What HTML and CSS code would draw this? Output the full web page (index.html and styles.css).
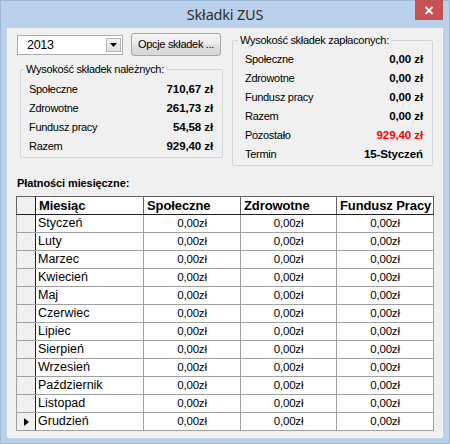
FILE: index.html
```html
<!DOCTYPE html>
<html lang="pl">
<head>
<meta charset="utf-8">
<title>Składki ZUS</title>
<link rel="stylesheet" href="styles.css">
</head>
<body>
<div class="window">
  <div class="titlebar">
    <span class="spacer"></span>
    <div class="title">Składki ZUS</div>
    <div class="close">
      <svg width="10" height="9" viewBox="0 0 10 9"><path d="M1.5 1 L8.5 8 M8.5 1 L1.5 8" stroke="#fff" stroke-width="1.8" fill="none"/></svg>
    </div>
  </div>
  <div class="client">
    <div class="top">
      <div class="leftcol">
        <div class="controls">
          <div class="combo">
            <span class="combo-text">2013</span>
            <span class="combo-btn"><svg width="7" height="4" viewBox="0 0 7 4"><path d="M0 0 H7 L3.5 4 Z" fill="#000"/></svg></span>
          </div>
          <div class="button">Opcje składek ...</div>
        </div>
        <fieldset class="group group-left">
          <legend>Wysokość składek należnych:</legend>
          <div class="row"><span>Społeczne</span><b>710,67 zł</b></div>
          <div class="row"><span>Zdrowotne</span><b>261,73 zł</b></div>
          <div class="row"><span>Fundusz pracy</span><b>54,58 zł</b></div>
          <div class="row"><span>Razem</span><b>929,40 zł</b></div>
        </fieldset>
      </div>
      <fieldset class="group group-right">
        <legend>Wysokość składek zapłaconych:</legend>
        <div class="row"><span>Społeczne</span><b>0,00 zł</b></div>
        <div class="row"><span>Zdrowotne</span><b>0,00 zł</b></div>
        <div class="row"><span>Fundusz pracy</span><b>0,00 zł</b></div>
        <div class="row"><span>Razem</span><b>0,00 zł</b></div>
        <div class="row"><span>Pozostało</span><b class="red">929,40 zł</b></div>
        <div class="row"><span>Termin</span><b>15-Styczeń</b></div>
      </fieldset>
    </div>
    <div class="section-label">Płatności miesięczne:</div>
    <table class="grid">
      <colgroup>
        <col class="c-ind"><col class="c-month"><col class="c-val"><col class="c-val2"><col class="c-val">
      </colgroup>
      <thead>
        <tr><th class="ind"></th><th>Miesiąc</th><th>Społeczne</th><th>Zdrowotne</th><th>Fundusz Pracy</th></tr>
      </thead>
      <tbody>
        <tr><td class="ind"></td><td class="m">Styczeń</td><td>0,00zł</td><td>0,00zł</td><td>0,00zł</td></tr>
        <tr><td class="ind"></td><td class="m">Luty</td><td>0,00zł</td><td>0,00zł</td><td>0,00zł</td></tr>
        <tr><td class="ind"></td><td class="m">Marzec</td><td>0,00zł</td><td>0,00zł</td><td>0,00zł</td></tr>
        <tr><td class="ind"></td><td class="m">Kwiecień</td><td>0,00zł</td><td>0,00zł</td><td>0,00zł</td></tr>
        <tr><td class="ind"></td><td class="m">Maj</td><td>0,00zł</td><td>0,00zł</td><td>0,00zł</td></tr>
        <tr><td class="ind"></td><td class="m">Czerwiec</td><td>0,00zł</td><td>0,00zł</td><td>0,00zł</td></tr>
        <tr><td class="ind"></td><td class="m">Lipiec</td><td>0,00zł</td><td>0,00zł</td><td>0,00zł</td></tr>
        <tr><td class="ind"></td><td class="m">Sierpień</td><td>0,00zł</td><td>0,00zł</td><td>0,00zł</td></tr>
        <tr><td class="ind"></td><td class="m">Wrzesień</td><td>0,00zł</td><td>0,00zł</td><td>0,00zł</td></tr>
        <tr><td class="ind"></td><td class="m">Październik</td><td>0,00zł</td><td>0,00zł</td><td>0,00zł</td></tr>
        <tr><td class="ind"></td><td class="m">Listopad</td><td>0,00zł</td><td>0,00zł</td><td>0,00zł</td></tr>
        <tr><td class="ind"><svg class="arrow" width="5" height="8" viewBox="0 0 5 8"><path d="M0 0 L5 4 L0 8 Z" fill="#000"/></svg></td><td class="m">Grudzień</td><td>0,00zł</td><td>0,00zł</td><td>0,00zł</td></tr>
      </tbody>
    </table>
  </div>
</div>
</body>
</html>
```

FILE: styles.css
```css
html, body {
  margin: 0;
  padding: 0;
}
body {
  width: 450px;
  height: 444px;
  overflow: hidden;
  font-family: "Liberation Sans", Arial, sans-serif;
  font-size: 11px;
  color: #000;
}
.window {
  width: 450px;
  height: 444px;
  box-sizing: border-box;
  background: #b9d1ea;
  border: 1px solid #9fb7d2;
  display: flex;
  flex-direction: column;
}
.titlebar {
  height: 27px;
  display: grid;
  grid-template-columns: 1fr auto 1fr;
}
.title {
  font-family: "Noto Sans", "Open Sans", sans-serif;
  font-size: 14.5px;
  letter-spacing: -0.2px;
  color: #2e2e2e;
  line-height: 27px;
}
.close {
  justify-self: end;
  align-self: start;
  margin-top: -1px;
  margin-right: 6px;
  width: 28px;
  height: 20px;
  background: #c75050;
  display: flex;
  align-items: center;
  justify-content: center;
}
.client {
  margin: 0 7px;
  height: 409px;
  box-sizing: border-box;
  background: #f0f0f0;
  padding: 5px 9px 0 8px;
  box-shadow: 1px 0 0 #f7f9fc, -1px 0 0 #f7f9fc, 0 1px 0 #f7f9fc;
}
.top {
  display: flex;
  align-items: flex-start;
}
.leftcol {
  width: 206px;
  margin-left: 1px;
  display: flex;
  flex-direction: column;
}
.controls {
  display: flex;
  align-items: flex-start;
  gap: 8px;
  height: 23px;
}
.combo {
  margin-top: 2px;
  width: 106px;
  height: 20px;
  box-sizing: border-box;
  border: 1px solid #abadb3;
  background: #fff;
  display: flex;
  align-items: center;
  justify-content: space-between;
  padding: 0 1px 0 9px;
}
.combo-text {
  font-size: 12.5px;
  letter-spacing: -0.3px;
}
.combo-btn {
  width: 15px;
  height: 14px;
  box-sizing: border-box;
  border: 1px solid #b5b5b5;
  background: linear-gradient(#f4f4f4, #e2e2e2);
  display: flex;
  align-items: center;
  justify-content: center;
}
.button {
  width: 90px;
  height: 23px;
  box-sizing: border-box;
  border: 1px solid #a9a9a9;
  border-radius: 3px;
  background: linear-gradient(#f4f4f4 0%, #ececec 48%, #dfdfdf 52%, #d6d6d6 100%);
  display: flex;
  align-items: center;
  justify-content: center;
  letter-spacing: -0.3px;
  padding-bottom: 1px;
}
.group {
  margin: 0;
  border: 1px solid #d0d5da;
  border-radius: 2px;
  box-sizing: border-box;
  min-inline-size: 0;
}
.group legend {
  padding: 0 2px;
  line-height: 12px;
  letter-spacing: -0.3px;
}
.group-left {
  margin-left: 3px;
  margin-top: 7px;
  width: 203px;
  padding: 4px 9px 2px 3px;
}
.group-left .row {
  padding-left: 5px;
}
.group-right {
  margin-left: 9px;
  margin-top: 1px;
  width: 204px;
  padding: 3px 9px 2px 5px;
}
.group-right .row {
  padding-left: 7px;
}
.row {
  height: 19px;
  display: flex;
  align-items: center;
  justify-content: space-between;
}
.row span {
  letter-spacing: -0.3px;
}
.row b {
  font-size: 11.5px;
  letter-spacing: -0.1px;
}
.row b.red {
  color: #ff0000;
}
.section-label {
  margin-top: 10px;
  margin-left: 1px;
  line-height: 14px;
  font-weight: bold;
  letter-spacing: -0.1px;
}
.grid {
  margin-top: 6px;
  width: 418px;
  table-layout: fixed;
  border-collapse: collapse;
  border: 1px solid #646464;
  background: #fff;
}
.c-ind { width: 19px; }
.c-month { width: 108px; }
.c-val { width: 97px; }
.c-val2 { width: 96px; }
.grid th, .grid td {
  height: 17px;
  padding: 0;
  border: 1px solid #a0a0a0;
  white-space: nowrap;
  overflow: hidden;
}
.grid th {
  font-size: 13px;
  font-weight: bold;
  text-align: left;
  padding-left: 3px;
  letter-spacing: -0.1px;
  border-color: #646464;
  border-bottom: 1px solid #202020;
  line-height: 15px;
}
.grid td {
  text-align: center;
  font-size: 11.5px;
  letter-spacing: -0.2px;
  line-height: 15px;
}
.grid td.m {
  text-align: left;
  padding-left: 2px;
  font-size: 12.5px;
  letter-spacing: 0;
}
.grid .ind {
  background: #f0f0f0;
  border-right: 1px solid #202020;
  padding: 0;
  text-align: center;
}
.arrow {
  display: block;
  margin: 0 auto;
}
```
